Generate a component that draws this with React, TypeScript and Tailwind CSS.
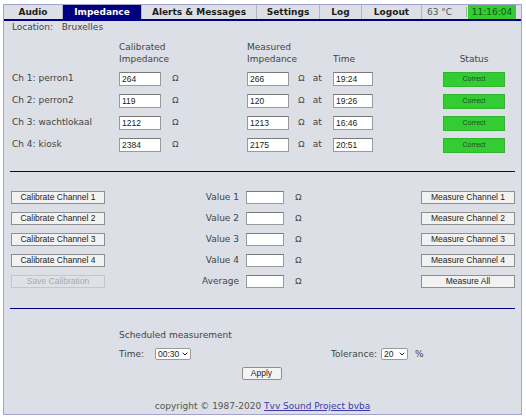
import { ChevronDown } from "lucide-react";

const tabs = [
  { label: "Audio", w: "w-[59px]" },
  { label: "Impedance", w: "w-[79px]", active: true },
  { label: "Alerts & Messages", w: "w-[115px]" },
  { label: "Settings", w: "w-[63px]" },
  { label: "Log", w: "w-[42px]" },
  { label: "Logout", w: "w-[60px]" },
];

const channels = [
  { name: "Ch 1: perron1", cal: "264", meas: "266", time: "19:24" },
  { name: "Ch 2: perron2", cal: "119", meas: "120", time: "19:26" },
  { name: "Ch 3: wachtlokaal", cal: "1212", meas: "1213", time: "16:46" },
  { name: "Ch 4: kiosk", cal: "2384", meas: "2175", time: "20:51" },
];

function Field({ value = "", className = "" }: { value?: string; className?: string }) {
  return (
    <div
      className={`flex items-center border border-[#9a9a9a] border-t-[#7a7a7a] bg-white pl-[2px] font-['Liberation_Sans',sans-serif] text-[8.5px] text-[#222] ${className}`}
    >
      {value}
    </div>
  );
}

function Btn({ label, disabled = false }: { label: string; disabled?: boolean }) {
  return (
    <div
      className={`flex h-[13px] w-[94px] items-center justify-center border font-['Liberation_Sans',sans-serif] text-[8.5px] ${
        disabled
          ? "border-[#c4c6cc] bg-[#dfe1e6] text-[#a8aab0]"
          : "border-[#8f8f8f] bg-[#f2f2f2] text-[#222]"
      }`}
    >
      {label}
    </div>
  );
}

function Ohm({ className = "" }: { className?: string }) {
  return <span className={`font-['Liberation_Sans',sans-serif] text-[9px] text-[#444] ${className}`}>Ω</span>;
}

function Select({ value, className = "" }: { value: string; className?: string }) {
  return (
    <div
      className={`flex h-[12px] items-center justify-between rounded-[2px] border border-[#9a9a9a] bg-white pl-[2px] pr-[1px] font-['Liberation_Sans',sans-serif] text-[8.5px] text-[#222] ${className}`}
    >
      <span>{value}</span>
      <ChevronDown size={8} strokeWidth={3} />
    </div>
  );
}

export default function App() {
  return (
    <div className="min-h-screen bg-white pl-[3px] pt-[4px] font-['DejaVu_Sans',sans-serif] text-[9px] text-[#333]">
      <div className="flex h-[411px] w-[519px] flex-col border border-[#a3a3c9] bg-[#dcdfe6]">
        {/* nav */}
        <div className="flex h-[14px] items-stretch leading-[14px]">
          {tabs.map((t) => (
            <div
              key={t.label}
              className={`${t.w} border-r border-[#b4b6bc] text-center font-bold ${
                t.active ? "bg-[#000080] text-white" : "text-[#1c1c1c]"
              }`}
            >
              {t.label}
            </div>
          ))}
          <div className="flex w-[44px] items-center pl-[5px] text-[#555]">63 °C</div>
          <div className="mr-[1px] w-[1px] self-center bg-[#aaa] h-[10px]" />
          <div className="w-[48px] bg-[#33cc33] text-center text-[#0a5a0a]">11:16:04</div>
        </div>
        <div className="h-[2px] bg-[#000080]" />

        <div className="mt-[1px] pl-[8px] leading-[11px] text-[#444]">
          Location:&nbsp;&nbsp;&nbsp;Bruxelles
        </div>

        {/* impedance table */}
        <div className="mt-[8px] flex pl-[8px] leading-[12px] text-[#444]">
          <div className="w-[107px]" />
          <div className="w-[128px]">
            Calibrated
            <br />
            Impedance
          </div>
          <div className="w-[86px]">
            Measured
            <br />
            Impedance
          </div>
          <div className="flex w-[110px] items-end">Time</div>
          <div className="flex w-[62px] items-end justify-center">Status</div>
        </div>

        <div className="mt-[3px] flex flex-col pl-[8px]">
          {channels.map((c) => (
            <div key={c.name} className="flex h-[22px] items-center text-[#444]">
              <div className="w-[107px]">{c.name}</div>
              <div className="flex w-[128px] items-center">
                <Field value={c.cal} className="h-[14px] w-[42px]" />
                <Ohm className="ml-[11px]" />
              </div>
              <div className="flex w-[86px] items-center">
                <Field value={c.meas} className="h-[14px] w-[42px]" />
                <Ohm className="ml-[9px]" />
                <span className="ml-[8px]">at</span>
              </div>
              <Field value={c.time} className="h-[14px] w-[40px]" />
              <div className="ml-[70px] flex h-[15px] w-[62px] items-center justify-center border border-[#2fb52f] bg-[#33cc33] font-['Liberation_Sans',sans-serif] text-[7px] text-[#1e4d1e]">
                Correct
              </div>
            </div>
          ))}
        </div>

        <div className="mx-[6px] mt-[15px] h-[1px] bg-[#000080]" />

        {/* calibrate / measure */}
        <div className="mt-[15px] flex flex-col px-[6px]">
          {[1, 2, 3, 4, 5].map((n) => (
            <div key={n} className="flex h-[21px] items-center">
              <div className="ml-[1px]">
                <Btn label={n === 5 ? "Save Calibration" : `Calibrate Channel ${n}`} disabled={n === 5} />
              </div>
              <div className="w-[134px] text-right text-[#444]">{n === 5 ? "Average" : `Value ${n}`}</div>
              <Field className="ml-[7px] h-[13px] w-[38px]" />
              <Ohm className="ml-[11px]" />
              <div className="ml-auto">
                <Btn label={n === 5 ? "Measure All" : `Measure Channel ${n}`} />
              </div>
            </div>
          ))}
        </div>

        <div className="mx-[6px] mt-[16px] h-[1px] bg-[#000080]" />

        {/* schedule */}
        <div className="mt-[20px] pl-[115px] leading-[12px] text-[#444]">Scheduled measurement</div>
        <div className="mt-[7px] flex items-center pl-[115px] leading-[12px] text-[#444]">
          <span className="w-[36px]">Time:</span>
          <Select value="00:30" className="w-[36px]" />
          <span className="ml-[140px]">Tolerance:</span>
          <Select value="20" className="ml-[4px] w-[27px]" />
          <span className="ml-[7px]">%</span>
        </div>
        <div className="mt-[7px] flex justify-center pr-[2px]">
          <div className="flex h-[13px] w-[40px] items-center justify-center rounded-[2px] border border-[#8f8f8f] bg-[#f4f4f4] font-['Liberation_Sans',sans-serif] text-[8.5px] text-[#222]">
            Apply
          </div>
        </div>

        <div className="mt-auto mb-[2px] text-center leading-[11px] text-[#555]">
          copyright © 1987-2020{" "}
          <span className="text-[#3a3aa8] underline">Tvv Sound Project bvba</span>
        </div>
      </div>
    </div>
  );
}
